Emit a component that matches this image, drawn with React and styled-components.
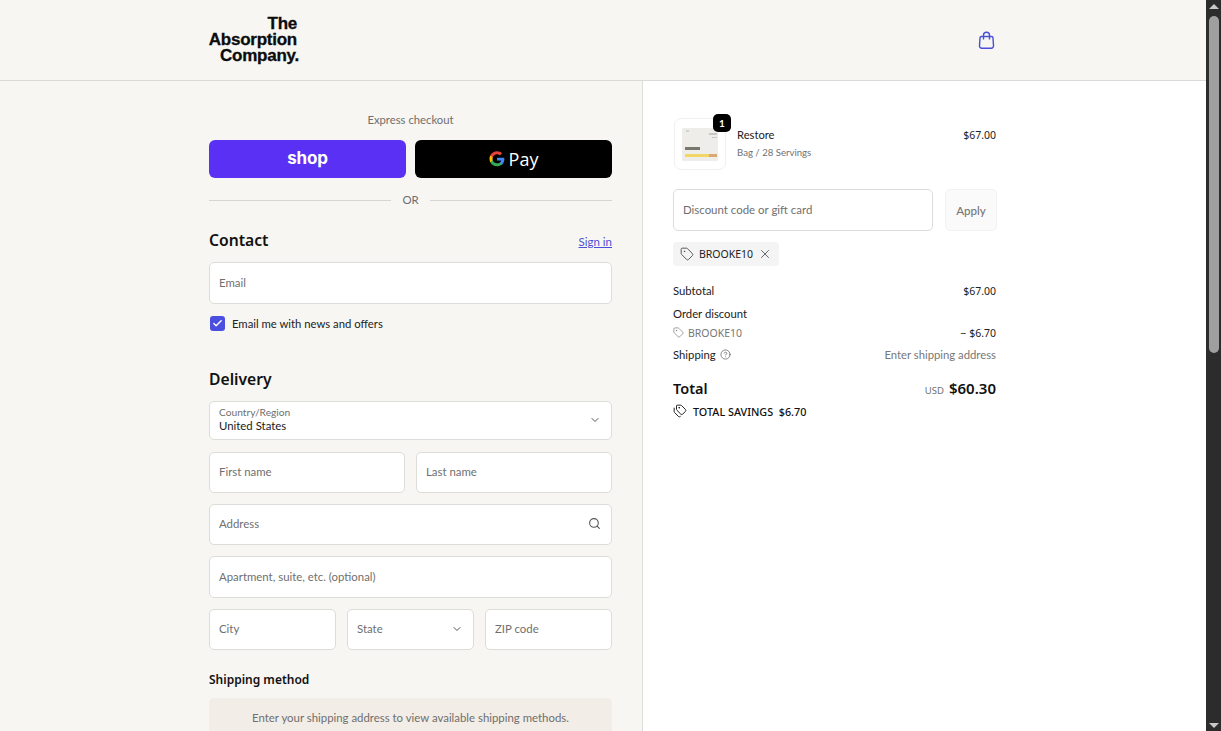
import styled, { createGlobalStyle } from "styled-components";
import { ChevronDown, Search, Tag, Tags, X, CircleHelp, Check } from "lucide-react";

const GlobalStyle = createGlobalStyle`
html, body { margin: 0; padding: 0; height: 100%; overflow: hidden; }
* { box-sizing: border-box; }
body { font-family: "Lato", "Noto Sans", sans-serif; font-size: 11.4px; color: #1a1a1a; background: #fff; }
`

const Screen = styled.div`
display: flex;
height: 731px;
overflow: hidden;
`
const Page = styled.div`
flex: 1;
min-width: 0;
overflow: hidden;
`
const ScrollRail = styled.div`
width: 15px;
background: #2c2c2c;
display: flex;
flex-direction: column;
align-items: center;
padding-top: 4px;
`
const ScrollThumb = styled.div`
width: 10px;
height: 337px;
margin-top: 7px;
background: #9f9f9f;
border-radius: 5px;
`
const ScrollArrow = styled.div`
width: 0;
height: 0;
border-left: 5px solid transparent;
border-right: 5px solid transparent;
${p => p.$down ? "border-top: 5px solid #c8c8c8; margin-top: auto; margin-bottom: 3px;" : "border-bottom: 5px solid #c8c8c8;"}
`

const Header = styled.header`
height: 81px;
background: #f7f6f2;
border-bottom: 1px solid #d9d9d6;
display: grid;
grid-template-columns: 642px 1fr;
`
const HeaderLeft = styled.div`
padding: 16px 0 0 209px;
`
const HeaderRight = styled.div`
padding: 31px 2px 0 31px;
width: 355px;
display: flex;
justify-content: flex-end;
`
const Logo = styled.div`
width: 91px;
font-family: "Liberation Sans", Arial, sans-serif;
font-weight: 700;
font-size: 17px;
line-height: 16px;
letter-spacing: -0.25px;
color: #0c0c0c;
display: flex;
flex-direction: column;
align-items: flex-end;
-webkit-text-stroke: 0.3px #0c0c0c;
`
const LogoLine = styled.span`
margin-right: ${p => p.$right || 0}px;
`

const Columns = styled.div`
display: grid;
grid-template-columns: 643px 1fr;
height: 650px;
overflow: hidden;
`
const LeftCol = styled.main`
background: #f7f6f2;
border-right: 1px solid #dededb;
padding: 31px 30px 0 209px;
overflow: hidden;
`
const RightCol = styled.aside`
background: #fff;
padding: 37px 0 0 30px;
width: 354px;
`

const Express = styled.div`
text-align: center;
color: #6f6f6f;
font-size: 11.3px;
line-height: 16px;
`
const PayRow = styled.div`
display: grid;
grid-template-columns: 197px 197px;
gap: 9px;
margin-top: 12px;
`
const PayButton = styled.div`
height: 38px;
border-radius: 6px;
background: ${p => p.$bg};
color: #fff;
display: flex;
align-items: center;
justify-content: center;
`
const ShopWord = styled.span`
font-family: "Inter", sans-serif;
font-weight: 700;
font-size: 17px;
letter-spacing: -0.2px;
margin-top: -2px;
`
const PayWord = styled.span`
font-family: "Open Sans", sans-serif;
font-size: 18px;
margin-left: 4px;
`
const OrRow = styled.div`
display: flex;
align-items: center;
gap: 11px;
margin-top: 14px;
color: #6f6f6f;
font-size: 11.4px;
line-height: 16px;
`
const OrLine = styled.div`
flex: 1;
height: 1px;
background: #d6d6d2;
`

const SectionHead = styled.div`
display: flex;
justify-content: space-between;
align-items: center;
margin-top: ${p => p.$top}px;
height: 24px;
`
const H2 = styled.h2`
margin: 0;
font-family: "Noto Sans", sans-serif;
font-size: 15.7px;
font-weight: 600;
color: #111;
`
const SignIn = styled.a`
color: #4a4fd8;
font-size: 11.5px;
text-decoration: underline;
margin-top: 3px;
`
const Stack = styled.div`
display: flex;
flex-direction: column;
gap: 11px;
margin-top: ${p => p.$top || 0}px;
`
const FieldRow = styled.div`
display: grid;
grid-template-columns: ${p => p.$cols};
gap: 11px;
`
const Field = styled.div`
height: ${p => p.$h || 41}px;
margin-bottom: ${p => p.$after || 0}px;
background: #fff;
border: 1px solid #dcdcd8;
border-radius: 5px;
padding: 0 10px 2px 9px;
display: flex;
align-items: center;
justify-content: space-between;
color: #6f6f6f;
font-size: 11.4px;
`
const FieldText = styled.div`
display: flex;
flex-direction: column;
`
const SmallLabel = styled.span`
font-size: 10.2px;
line-height: 13px;
color: #6f6f6f;
`
const FieldValue = styled.span`
font-size: 11.4px;
line-height: 14px;
color: #1a1a1a;
`
const CheckRow = styled.div`
display: flex;
align-items: center;
gap: 7px;
margin: 12px 0 0 1px;
font-size: 11.3px;
line-height: 14px;
color: #222;
`
const CheckBox = styled.span`
width: 15px;
height: 15px;
border-radius: 3px;
background: #4a4fe0;
color: #fff;
display: flex;
align-items: center;
justify-content: center;
`
const H3 = styled.h3`
margin: 21px 0 0;
font-family: "Noto Sans", sans-serif;
font-size: 12px;
line-height: 18px;
font-weight: 600;
color: #111;
`
const ShipNote = styled.div`
margin-top: 9px;
height: 60px;
padding-top: 12px;
background: #f2ede6;
border-radius: 5px;
text-align: center;
color: #6f6f6f;
font-size: 11.4px;
line-height: 16px;
`

const Product = styled.div`
display: flex;
align-items: flex-start;
padding-right: 1px;
`
const Thumb = styled.div`
position: relative;
width: 52px;
height: 52px;
background: #fff;
border: 1px solid #f0f0f0;
border-radius: 7px;
margin-left: 1px;
display: flex;
align-items: center;
justify-content: center;
`
const Badge = styled.span`
position: absolute;
top: -5px;
right: -6px;
width: 18px;
height: 18px;
border-radius: 5px;
background: #000;
color: #fff;
font-size: 10px;
font-weight: 700;
display: flex;
align-items: center;
justify-content: center;
`
const ProductInfo = styled.div`
margin-left: 11px;
flex: 1;
padding-top: 9px;
`
const ProductName = styled.div`
font-size: 11.2px;
line-height: 16px;
color: #222;
`
const ProductSub = styled.div`
font-size: 9.6px;
line-height: 13px;
margin-top: 3px;
color: #707070;
`
const Amount = styled.span`
font-family: "Noto Sans", sans-serif;
font-size: 10.5px;
color: #222;
`
const ProductPrice = styled.div`
line-height: 16px;
padding-top: 9px;
`
const DiscountRow = styled.div`
display: grid;
grid-template-columns: 260px 52px;
gap: 12px;
margin-top: 19px;
`
const DiscountInput = styled.div`
height: 42px;
border: 1px solid #dcdcd8;
border-radius: 5px;
padding: 0 9px 1px;
display: flex;
align-items: center;
color: #6f6f6f;
font-size: 11.45px;
`
const ApplyButton = styled.div`
height: 42px;
background: #fafafa;
border: 1px solid #f2f2f2;
border-radius: 5px;
display: flex;
align-items: center;
justify-content: center;
color: #777;
font-size: 11.6px;
font-weight: 500;
`
const Chip = styled.div`
display: inline-flex;
align-items: center;
gap: 5px;
height: 24px;
margin-top: 11px;
padding: 0 7px;
background: #f4f4f4;
border-radius: 4px;
font-family: "Noto Sans", sans-serif;
font-size: 10.5px;
color: #222;
`
const Summary = styled.div`
margin-top: 15px;
`
const Line = styled.div`
display: flex;
justify-content: space-between;
align-items: center;
height: ${p => p.$h || 19}px;
margin-top: ${p => p.$top || 0}px;
padding-right: 1px;
font-size: 11.3px;
color: #222;
`
const Inline = styled.span`
display: inline-flex;
align-items: center;
gap: 4px;
`
const Muted = styled.span`
color: #777;
`
const CodeText = styled.span`
font-family: "Noto Sans", sans-serif;
font-size: 10.5px;
color: #777;
`
const TotalLabel = styled.span`
font-family: "Noto Sans", sans-serif;
font-size: 14.5px;
font-weight: 600;
color: #111;
`
const TotalValue = styled.span`
display: inline-flex;
align-items: baseline;
gap: 5px;
font-family: "Noto Sans", sans-serif;
font-size: 15px;
font-weight: 600;
color: #111;
`
const Currency = styled.span`
font-size: 9.5px;
font-weight: 400;
color: #707070;
`
const Savings = styled.div`
display: flex;
align-items: center;
gap: 6px;
margin-top: 3px;
height: 16px;
font-family: "Noto Sans", sans-serif;
font-size: 10.8px;
font-weight: 500;
color: #111;
`

const BagIcon = () => (
  <svg width="17" height="19" viewBox="0 0 17 19" fill="none" stroke="#4a4fd8" strokeWidth="1.4">
    <path d="M5.500 8.500V4.300a3 3 0 0 1 6 0v4.200" />
    <path d="M3.500 5.500h10a1.500 1.500 0 0 1 1.500 1.400l.5 8a2.200 2.200 0 0 1-2.200 2.300H3.700a2.200 2.200 0 0 1-2.200-2.300l.5-8a1.500 1.500 0 0 1 1.500-1.400Z" />
  </svg>
)

const GoogleG = () => (
  <svg width="16" height="16" viewBox="0 0 48 48">
    <path fill="#4285F4" d="M46 24.500c0-1.600-.1-3.100-.4-4.500H24v8.500h12.400c-.5 2.800-2.100 5.200-4.500 6.800v5.600h7.300C43.500 36.900 46 31.200 46 24.500Z" />
    <path fill="#34A853" d="M24 46c6.100 0 11.200-2 14.900-5.500l-7.300-5.600c-2 1.400-4.600 2.200-7.600 2.200-5.900 0-10.900-4-12.700-9.300H3.800v5.800C7.500 40.900 15.200 46 24 46Z" />
    <path fill="#FBBC04" d="M11.300 27.800c-.5-1.400-.7-2.800-.7-4.300s.3-3 .7-4.300v-5.800H3.800C2.300 16.400 1.400 19.600 1.400 23.500s.9 7.100 2.400 10.100l7.500-5.800Z" />
    <path fill="#EA4335" d="M24 9.900c3.300 0 6.300 1.100 8.600 3.400l6.500-6.500C35.200 3.100 30.100 1 24 1 15.200 1 7.500 6.100 3.800 13.400l7.500 5.800C13.100 13.900 18.100 9.900 24 9.900Z" />
  </svg>
)

const PackShot = () => (
  <svg width="44" height="40" viewBox="0 0 44 40">
    <rect x="4" y="4" width="36" height="33" rx="1" fill="#eeede9" />
    <rect x="8" y="6" width="3" height="2" fill="#d2d2cd" />
    <rect x="31" y="9" width="8" height="2" fill="#c8c8c3" />
    <rect x="34" y="13" width="5" height="1" fill="#c8c8c3" />
    <rect x="7" y="23" width="15" height="3" fill="#77776c" />
    <rect x="7" y="30" width="28" height="3" fill="#f2d668" />
    <rect x="31" y="30" width="8" height="3" fill="#dca870" />
  </svg>
)

const App = () => {
    return (
        <Screen>
            <GlobalStyle />
            <Page>
                <Header>
                    <HeaderLeft>
                        <Logo>
                            <LogoLine $right={3}>The</LogoLine>
                            <LogoLine $right={3}>Absorption</LogoLine>
                            <LogoLine $right={1}>Company.</LogoLine>
                        </Logo>
                    </HeaderLeft>
                    <HeaderRight>
                        <BagIcon />
                    </HeaderRight>
                </Header>
                <Columns>
                    <LeftCol>
                        <Express>Express checkout</Express>
                        <PayRow>
                            <PayButton $bg="#5a31f4"><ShopWord>shop</ShopWord></PayButton>
                            <PayButton $bg="#000"><GoogleG /><PayWord>Pay</PayWord></PayButton>
                        </PayRow>
                        <OrRow><OrLine />OR<OrLine /></OrRow>

                        <SectionHead $top={20}>
                            <H2>Contact</H2>
                            <SignIn>Sign in</SignIn>
                        </SectionHead>
                        <Stack $top={10}>
                            <Field $h={42}>Email</Field>
                        </Stack>
                        <CheckRow>
                            <CheckBox><Check size={11} strokeWidth={3} /></CheckBox>
                            Email me with news and offers
                        </CheckRow>

                        <SectionHead $top={36}>
                            <H2>Delivery</H2>
                        </SectionHead>
                        <Stack $top={10}>
                            <Field $h={39} $after={1}>
                                <FieldText>
                                    <SmallLabel>Country/Region</SmallLabel>
                                    <FieldValue>United States</FieldValue>
                                </FieldText>
                                <ChevronDown size={12} color="#555" />
                            </Field>
                            <FieldRow $cols="196px 196px">
                                <Field>First name</Field>
                                <Field>Last name</Field>
                            </FieldRow>
                            <Field>
                                Address
                                <Search size={13} color="#555" />
                            </Field>
                            <Field $h={42}>Apartment, suite, etc. (optional)</Field>
                            <FieldRow $cols="127px 127px 127px">
                                <Field>City</Field>
                                <Field>State<ChevronDown size={12} color="#555" /></Field>
                                <Field>ZIP code</Field>
                            </FieldRow>
                        </Stack>
                        <H3>Shipping method</H3>
                        <ShipNote>Enter your shipping address to view available shipping methods.</ShipNote>
                    </LeftCol>

                    <RightCol>
                        <Product>
                            <Thumb>
                                <PackShot />
                                <Badge>1</Badge>
                            </Thumb>
                            <ProductInfo>
                                <ProductName>Restore</ProductName>
                                <ProductSub>Bag / 28 Servings</ProductSub>
                            </ProductInfo>
                            <ProductPrice><Amount>$67.00</Amount></ProductPrice>
                        </Product>
                        <DiscountRow>
                            <DiscountInput>Discount code or gift card</DiscountInput>
                            <ApplyButton>Apply</ApplyButton>
                        </DiscountRow>
                        <Chip>
                            <Tag size={14} strokeWidth={1.5} color="#444" />
                            BROOKE10
                            <X size={14} strokeWidth={1.5} color="#555" />
                        </Chip>
                        <Summary>
                            <Line><span>Subtotal</span><Amount>$67.00</Amount></Line>
                            <Line $top={4}><span>Order discount</span></Line>
                            <Line>
                                <Inline><Tag size={11} strokeWidth={1.5} color="#777" /><CodeText>BROOKE10</CodeText></Inline>
                                <Amount>− $6.70</Amount>
                            </Line>
                            <Line $top={3}>
                                <Inline>Shipping <CircleHelp size={11} strokeWidth={1.5} color="#555" /></Inline>
                                <Muted>Enter shipping address</Muted>
                            </Line>
                            <Line $h={24} $top={12}>
                                <TotalLabel>Total</TotalLabel>
                                <TotalValue><Currency>USD</Currency>$60.30</TotalValue>
                            </Line>
                            <Savings>
                                <Tags size={14} strokeWidth={1.6} />
                                TOTAL SAVINGS&nbsp; $6.70
                            </Savings>
                        </Summary>
                    </RightCol>
                </Columns>
            </Page>
            <ScrollRail>
                <ScrollArrow />
                <ScrollThumb />
                <ScrollArrow $down />
            </ScrollRail>
        </Screen>
    )
}

export default App;
